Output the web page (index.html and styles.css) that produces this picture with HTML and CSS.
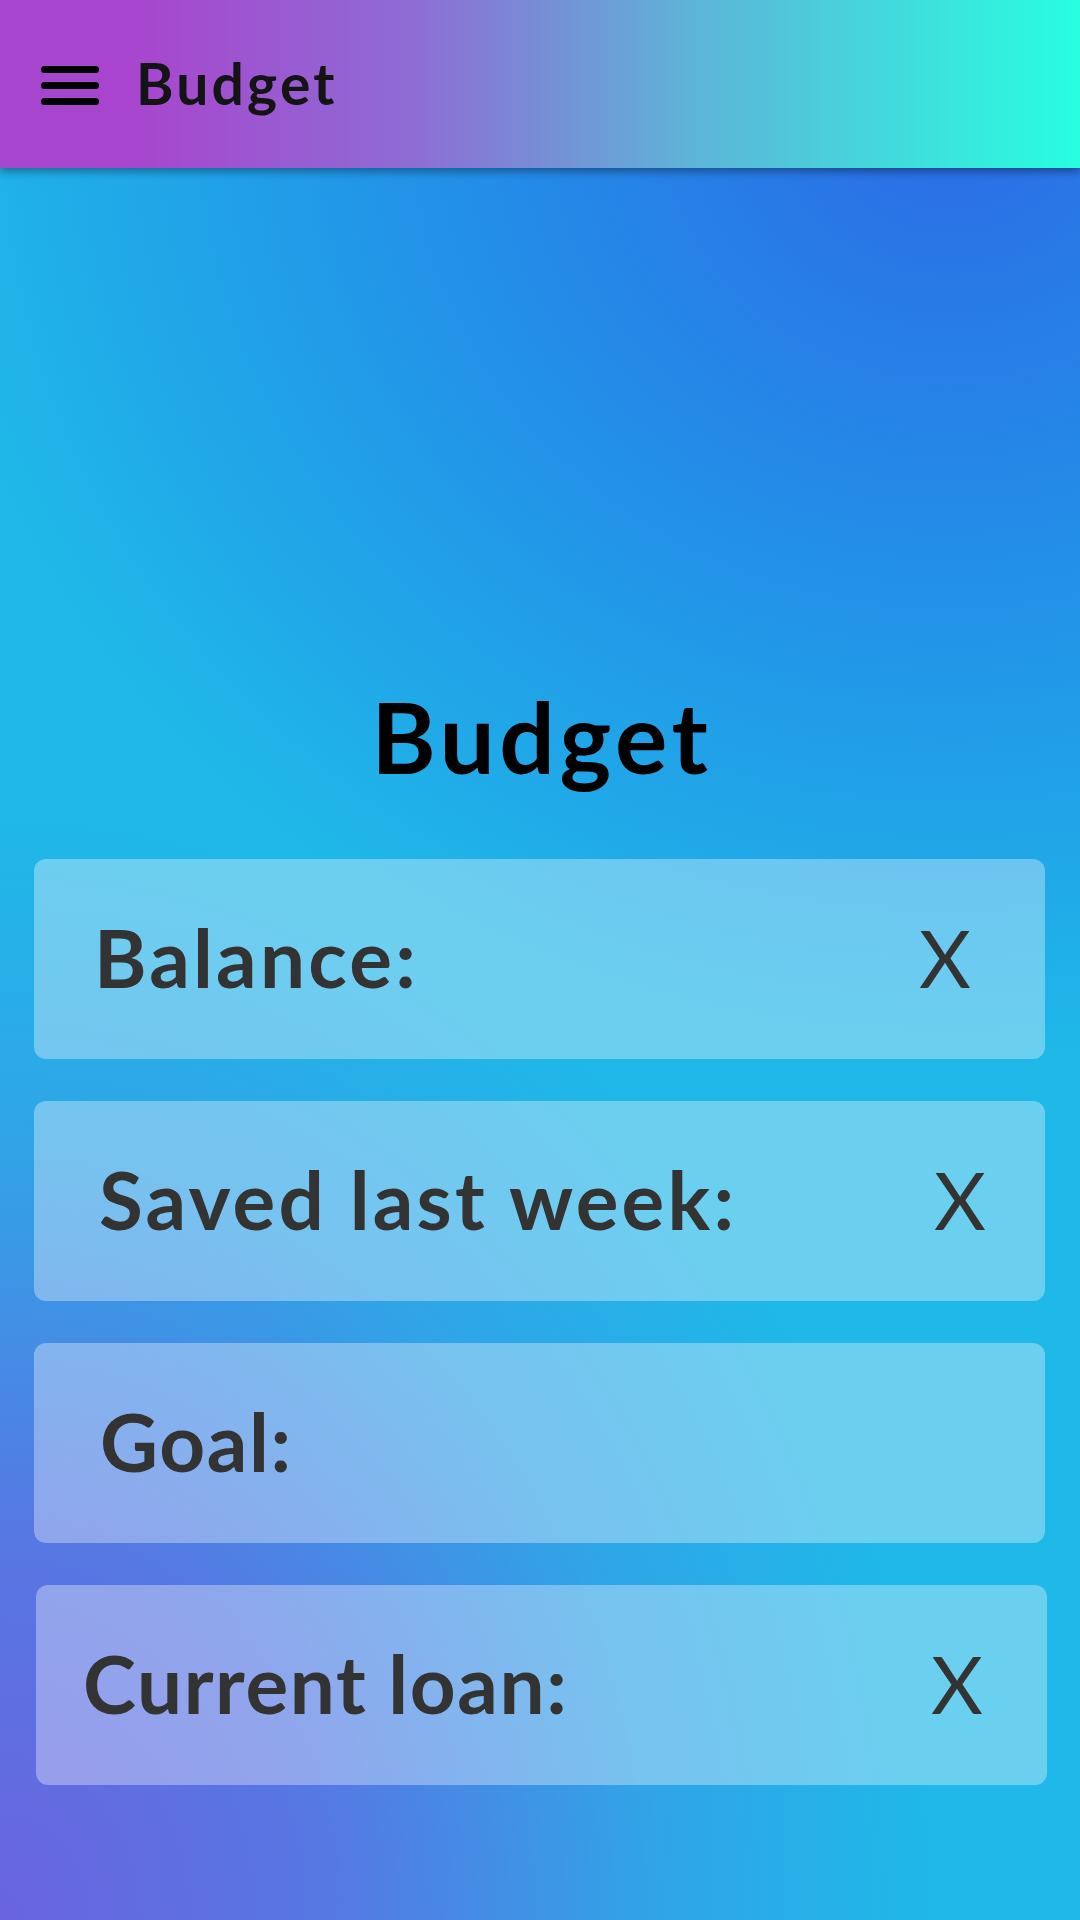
FILE: index.html
```html
<!DOCTYPE html>
<html lang="en">
<head>
<meta charset="utf-8">
<title>Budget</title>
<link rel="stylesheet" href="styles.css">
</head>
<body>
<header class="topbar">
  <div class="menu-icon" aria-label="Menu">
    <span class="bar"></span>
    <span class="bar"></span>
    <span class="bar"></span>
  </div>
  <div class="topbar-title">Budget</div>
</header>
<main class="content">
  <h1 class="page-title">Budget</h1>
  <section class="cards">
    <div class="card card-balance">
      <span class="label">Balance:</span>
      <span class="close">X</span>
    </div>
    <div class="card card-saved">
      <span class="label">Saved last week:</span>
      <span class="close">X</span>
    </div>
    <div class="card card-goal">
      <span class="label label-tight">Goal:</span>
    </div>
    <div class="card card-loan">
      <span class="label label-tight">Current loan:</span>
      <span class="close">X</span>
    </div>
  </section>
</main>
</body>
</html>
```
FILE: styles.css
```css
html, body {
  margin: 0;
  padding: 0;
}
body {
  width: 1080px;
  height: 1920px;
  overflow: hidden;
  font-family: "Lato", "Noto Sans", sans-serif;
  display: flex;
  flex-direction: column;
  background:
    radial-gradient(ellipse 1100px 1300px at 0% 100%, rgba(106,100,224,1) 0%, rgba(100,104,226,0.8) 30%, rgba(80,128,230,0.35) 60%, rgba(80,128,230,0) 85%),
    radial-gradient(ellipse 1150px 1050px at 88% 6%, rgba(44,108,230,1) 0%, rgba(36,128,232,0.7) 45%, rgba(36,140,232,0) 90%),
    #1fb8e8;
}
.topbar {
  position: relative;
  z-index: 2;
  height: 168px;
  flex: 0 0 168px;
  display: flex;
  align-items: center;
  padding-left: 41px;
  background: linear-gradient(90deg, #a845ce 12%, #8e6cd4 38%, #5cb6d8 65%, #28fee0 100%);
  box-shadow: 0 4px 8px rgba(0, 0, 0, 0.35);
}
.menu-icon {
  display: flex;
  flex-direction: column;
  gap: 9px;
  width: 58px;
  margin-top: 2px;
}
.bar {
  display: block;
  height: 7px;
  border-radius: 3.5px;
  background: #000;
}
.topbar-title {
  margin-left: 37px;
  font-size: 57px;
  font-weight: 700;
  letter-spacing: 3.2px;
  color: #141414;
  margin-top: -2px;
}
.content {
  flex: 1;
  display: flex;
  flex-direction: column;
  padding: 510px 35px 0 34px;
}
.page-title {
  margin: 0;
  text-align: center;
  font-size: 98px;
  line-height: 1.2;
  font-weight: 700;
  letter-spacing: 4.6px;
  text-indent: 4.6px;
  color: #000;
}
.cards {
  margin-top: 63px;
  display: flex;
  flex-direction: column;
  gap: 42px;
}
.card {
  height: 200px;
  display: flex;
  align-items: center;
  justify-content: space-between;
  border-radius: 12px;
  background: rgba(255, 255, 255, 0.34);
  color: #333;
  font-size: 80px;
  box-sizing: border-box;
}
.label {
  font-weight: 700;
  letter-spacing: 3.2px;
  margin-top: -4px;
}
.label-tight {
  letter-spacing: 1.6px;
}
.close {
  font-weight: 400;
  margin-top: -4px;
}
.card-balance { padding: 0 74px 0 60px; }
.card-saved { padding: 0 59px 0 65px; }
.card-goal { padding: 0 59px 0 66px; }
.card-loan { padding: 0 64px 0 47px; margin-left: 2px; margin-right: -2px; }
```
